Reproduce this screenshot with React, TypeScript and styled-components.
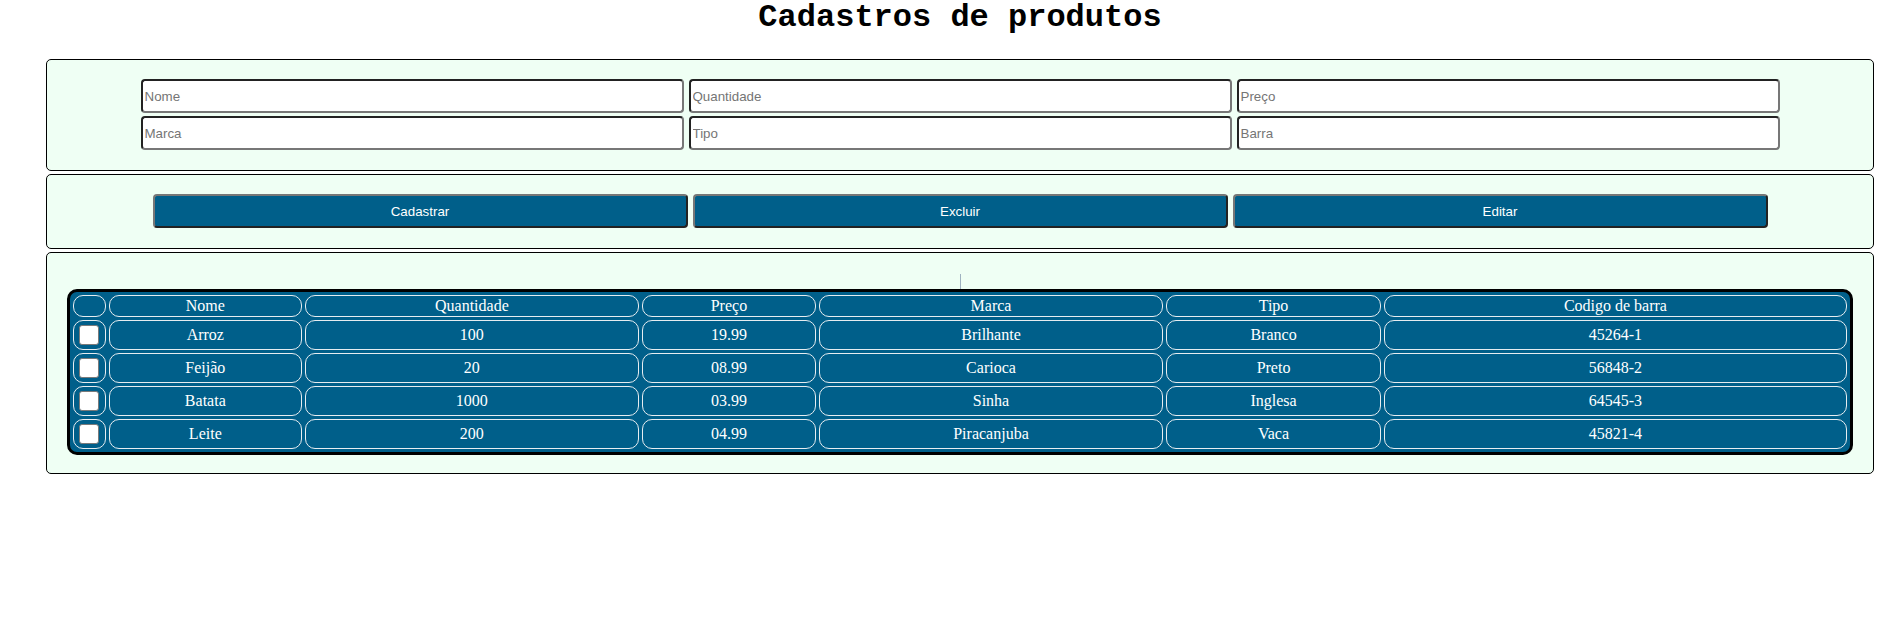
import styled, { createGlobalStyle } from "styled-components";
import React, { useState } from "react";

const GlobalStyle = createGlobalStyle`
  html, body {
    margin: 0;
    padding: 0;
    background: #ffffff;
    font-family: "Liberation Sans", Arial, sans-serif;
  }
`;

const Page = styled.div`
  padding: 0 23px 0 46px;
`;

const Title = styled.h1`
  margin: 0 0 23px;
  font-family: "Liberation Mono", "Courier New", monospace;
  font-size: 32px;
  line-height: 36px;
  font-weight: bold;
  text-align: center;
  color: #000;
`;

const Panel = styled.section<{ $bottom?: number }>`
  background-color: #effff4;
  border: 1px solid #000;
  border-radius: 5px;
  padding: 19px 20px ${(p) => p.$bottom ?? 20}px;
  margin-bottom: 3px;
`;

const InputGrid = styled.div`
  display: grid;
  grid-template-columns: repeat(3, 543px);
  column-gap: 5px;
  row-gap: 3px;
  justify-content: center;
`;

const Input = styled.input`
  box-sizing: border-box;
  height: 34px;
  width: 100%;
  padding: 1px 2px;
  background-color: #fff;
  border-width: 2px;
  border-style: solid;
  border-color: #222 #777 #777 #222;
  border-radius: 4px;
  font-family: "Liberation Sans", Arial, sans-serif;
  font-size: 13.33px;
  color: #000;

  &::placeholder {
    color: #757575;
  }
  &:focus {
    outline: none;
  }
`;

const ButtonGrid = styled.div`
  display: grid;
  grid-template-columns: repeat(3, 535px);
  column-gap: 5px;
  justify-content: center;
`;

const ActionButton = styled.button`
  box-sizing: border-box;
  height: 34px;
  background-color: #005f8a;
  color: #fff;
  border-width: 2px;
  border-style: solid;
  border-color: #777 #222 #222 #777;
  border-radius: 4px;
  font-family: "Liberation Sans", Arial, sans-serif;
  font-size: 13.33px;
  cursor: pointer;
`;

const Divider = styled.div`
  width: 1px;
  height: 15px;
  margin: 2px auto 0;
  background-color: #9fb2c0;
`;

const Table = styled.table`
  width: 100%;
  border-collapse: separate;
  border-spacing: 3px;
  border: 3px solid #000;
  border-radius: 10px;
  background-color: #005f8a;
  color: #fff;
  font-family: "Liberation Serif", "Times New Roman", serif;
  font-size: 16px;
`;

const Th = styled.th`
  border: 1px solid #e6edf1;
  border-radius: 10px;
  padding: 1px;
  font-weight: normal;
  text-align: center;
`;

const Td = styled.td`
  border: 1px solid #e6edf1;
  border-radius: 10px;
  padding: 1px;
  text-align: center;
  vertical-align: middle;
`;

const Check = styled.input.attrs({ type: "checkbox" })`
  appearance: none;
  display: block;
  box-sizing: border-box;
  width: 20px;
  height: 20px;
  margin: 3px auto;
  background-color: #fff;
  border: 1.5px solid #7a7a7a;
  border-radius: 3px;
  cursor: pointer;

  &:checked {
    background-color: #0075ff;
    border-color: #0075ff;
  }
`;

type Produto = {
  nome: string;
  quantidade: string;
  preco: string;
  marca: string;
  tipo: string;
  barra: string;
};

const produtos: Produto[] = [
  { nome: "Arroz", quantidade: "100", preco: "19.99", marca: "Brilhante", tipo: "Branco", barra: "45264-1" },
  { nome: "Feijão", quantidade: "20", preco: "08.99", marca: "Carioca", tipo: "Preto", barra: "56848-2" },
  { nome: "Batata", quantidade: "1000", preco: "03.99", marca: "Sinha", tipo: "Inglesa", barra: "64545-3" },
  { nome: "Leite", quantidade: "200", preco: "04.99", marca: "Piracanjuba", tipo: "Vaca", barra: "45821-4" },
];

// larguras medidas na tela original
const colunas = [33, 193, 335, 174, 345, 215, 464];

export default function App() {
  const [form, setForm] = useState({
    nome: "",
    quantidade: "",
    preco: "",
    marca: "",
    tipo: "",
    barra: "",
  });

  const onChange = (e: React.ChangeEvent<HTMLInputElement>) => {
    const { name, value } = e.target;
    setForm({ ...form, [name]: value });
  };

  return (
    <>
      <GlobalStyle />
      <Page>
        <Title>Cadastros de produtos</Title>

        <Panel>
          <InputGrid>
            <Input name="nome" placeholder="Nome" value={form.nome} onChange={onChange} />
            <Input name="quantidade" placeholder="Quantidade" value={form.quantidade} onChange={onChange} />
            <Input name="preco" placeholder="Preço" value={form.preco} onChange={onChange} />
            <Input name="marca" placeholder="Marca" value={form.marca} onChange={onChange} />
            <Input name="tipo" placeholder="Tipo" value={form.tipo} onChange={onChange} />
            <Input name="barra" placeholder="Barra" value={form.barra} onChange={onChange} />
          </InputGrid>
        </Panel>

        <Panel>
          <ButtonGrid>
            <ActionButton>Cadastrar</ActionButton>
            <ActionButton>Excluir</ActionButton>
            <ActionButton>Editar</ActionButton>
          </ButtonGrid>
        </Panel>

        <Panel $bottom={18}>
          <Divider />
          <Table>
            <colgroup>
              {colunas.map((w, i) => (
                <col key={i} style={{ width: w }} />
              ))}
            </colgroup>
            <thead>
              <tr>
                <Th></Th>
                <Th>Nome</Th>
                <Th>Quantidade</Th>
                <Th>Preço</Th>
                <Th>Marca</Th>
                <Th>Tipo</Th>
                <Th>Codigo de barra</Th>
              </tr>
            </thead>
            <tbody>
              {produtos.map((p) => (
                <tr key={p.barra}>
                  <Td>
                    <Check />
                  </Td>
                  <Td>{p.nome}</Td>
                  <Td>{p.quantidade}</Td>
                  <Td>{p.preco}</Td>
                  <Td>{p.marca}</Td>
                  <Td>{p.tipo}</Td>
                  <Td>{p.barra}</Td>
                </tr>
              ))}
            </tbody>
          </Table>
        </Panel>
      </Page>
    </>
  );
}
